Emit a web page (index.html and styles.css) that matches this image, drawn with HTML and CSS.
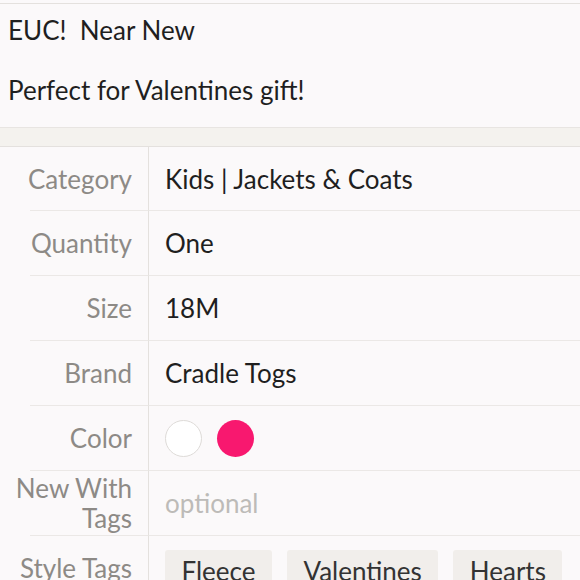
FILE: index.html
```html
<!DOCTYPE html>
<html lang="en">
<head>
    <meta charset="UTF-8">
    <meta name="viewport" content="width=device-width, initial-scale=1.0">
    <title>Listing details</title>
    <link rel="stylesheet" href="styles.css">
</head>
<body>
    <div class="description">
        <p>EUC!&nbsp; Near New</p>
        <p>Perfect for Valentines gift!</p>
    </div>
    <div class="band"></div>
    <div class="details">
        <div class="row">
            <div class="label">Category</div>
            <div class="value">Kids | Jackets &amp; Coats</div>
        </div>
        <div class="row">
            <div class="label">Quantity</div>
            <div class="value">One</div>
        </div>
        <div class="row">
            <div class="label">Size</div>
            <div class="value">18M</div>
        </div>
        <div class="row">
            <div class="label">Brand</div>
            <div class="value">Cradle Togs</div>
        </div>
        <div class="row">
            <div class="label">Color</div>
            <div class="value swatches">
                <span class="swatch white"></span>
                <span class="swatch pink"></span>
            </div>
        </div>
        <div class="row">
            <div class="label">New With<br>Tags</div>
            <div class="value placeholder">optional</div>
        </div>
        <div class="row">
            <div class="label">Style Tags</div>
            <div class="value tags">
                <span class="tag">Fleece</span>
                <span class="tag">Valentines</span>
                <span class="tag">Hearts</span>
            </div>
        </div>
    </div>
</body>
</html>
```

FILE: styles.css
```css
*{
    margin: 0;
    padding: 0;
    box-sizing: border-box;
    font-family: 'Lato', sans-serif;
}
body{
    background: #fbf9fa;
    color: #1f1f1f;
    overflow: hidden;
}
.description{
    margin-top: 3px;
    border-top: 1px solid #e4e1de;
    border-bottom: 1px solid #e8e5e2;
    padding: 11px 8px 0;
    height: 125px;
    font-size: 26px;
}
.description p{
    line-height: 30px;
    margin-bottom: 30px;
}
.band{
    height: 19px;
    background: #f4f2ee;
    border-bottom: 1px solid #e4e1de;
}
.details{
    display: flex;
    flex-direction: column;
}
.row{
    display: flex;
    height: 65px;
}
.row:first-child{
    height: 64px;
}
.label{
    width: 119px;
    flex-shrink: 0;
    margin-left: 30px;
    padding-right: 16px;
    border-bottom: 1px solid #ebe8e6;
    border-right: 1px solid #e4e1de;
    color: #8d8a86;
    font-size: 26px;
    text-align: right;
    display: flex;
    align-items: center;
    justify-content: flex-end;
    line-height: 30px;
    white-space: nowrap;
}
.value{
    flex: 1;
    padding-left: 16px;
    border-bottom: 1px solid #ebe8e6;
    font-size: 26px;
    display: flex;
    align-items: center;
    white-space: nowrap;
}
.placeholder{
    color: #bdbbb8;
}
.swatches{
    gap: 15px;
}
.swatch{
    width: 37px;
    height: 37px;
    border-radius: 50%;
}
.swatch.white{
    background: #fff;
    border: 1px solid #dedbd8;
}
.swatch.pink{
    background: #f8186f;
}
.tags{
    align-items: flex-start;
    padding-top: 14px;
    gap: 15px;
}
.tag{
    background: #f1eeeb;
    color: #333;
    border-radius: 3px;
    padding: 6px 16.5px;
    line-height: 30px;
}
```
